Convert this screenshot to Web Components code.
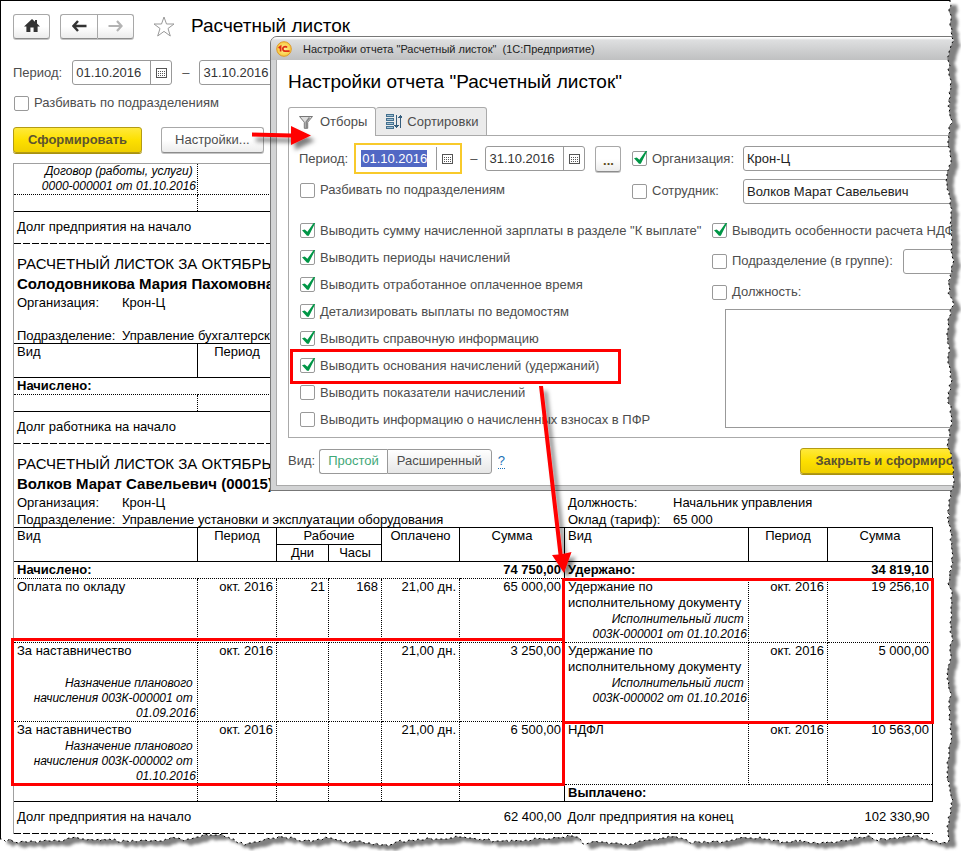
<!DOCTYPE html>
<html lang="ru">
<head>
<meta charset="utf-8">
<title>Расчетный листок</title>
<style>
  body { margin: 0; font: 13px/16px "Liberation Sans", Arial, sans-serif; color: #000; background: #fff; }
</style>
</head>
<body>
<payslip-app></payslip-app>

<script>
function define(name, html, setup) {
  const template = document.createElement('template');
  template.innerHTML = html;
  customElements.define(name, class extends HTMLElement {
    constructor() {
      super();
      this.attachShadow({ mode: 'open' }).append(template.content.cloneNode(true));
    }
    connectedCallback() { if (setup) setup.call(this, this.shadowRoot); }
  });
}

/* ---------- small controls ---------- */

define('ui-button', `
  <style>
    :host { display: inline-flex; }
    button { display: flex; align-items: center; justify-content: center; height: 26px; padding: 0 13px; box-sizing: border-box;
      font: inherit; color: #4d4d4d; white-space: nowrap;
      border: 1px solid #a8a8a8; border-bottom-color: #8c8c8c; border-radius: 3px;
      background: linear-gradient(#fff, #fff 50%, #ececec); box-shadow: 0 1px 0 #c4c4c4; }
    :host([accent]) button { padding: 0 14px; font-weight: bold; border-color: #b39b14; color: #5c5330;
      background: linear-gradient(#ffe93b, #fde000 50%, #efcf00); box-shadow: 0 1px 0 #a89110; }
    :host([square]) button { width: 26px; padding: 4px 0 0; color: #5c4a1a; font-weight: bold; }
    :host([icon]) button { width: 37px; height: 25px; padding: 0; }
    :host([first]) button { border-radius: 3px 0 0 3px; border-right: 0; }
    :host([last]) button { border-radius: 0 3px 3px 0; }
  </style>
  <button type="button"><slot></slot></button>`,
  function (root) {
    if (this.title) root.querySelector('button').setAttribute('aria-label', this.title);
  });

define('ui-check', `
  <style>
    :host { display: inline-flex; }
    label { display: inline-flex; align-items: center; gap: 5px; color: #4d4d4d; white-space: nowrap; }
    .box { position: relative; width: 15px; height: 15px; flex: none; }
    input { appearance: none; display: block; width: 15px; height: 15px; margin: 0; box-sizing: border-box;
      border: 1px solid #999; border-radius: 2px; background: #fff; }
    svg { position: absolute; inset: 0; overflow: visible; display: none; pointer-events: none; }
    input:checked + svg { display: block; }
  </style>
  <label>
    <span class="box"><input type="checkbox"><svg width="15" height="15" viewBox="0 0 15 15"><path d="M2 7.2 L4.8 6.4 L7.4 8.8 L13.6 0 L15.2 0 L8.8 12.8 L7 12.8 Z" fill="#009646"/></svg></span>
    <span><slot></slot></span>
  </label>`,
  function (root) { root.querySelector('input').checked = this.hasAttribute('checked'); });

define('date-field', `
  <style>
    :host { display: inline-flex; }
    .field { display: flex; align-items: center; width: 100px; height: 25px; box-sizing: border-box;
      border: 1px solid #999; border-radius: 3px; background: #fff; }
    input { flex: 1; min-width: 0; box-sizing: border-box; height: 17px; margin: 0; padding: 0 0 0 3px; border: 0; outline: 0;
      font: inherit; color: #333; background: none; }
    button { display: flex; align-items: center; justify-content: center; width: 21px; height: 23px; padding: 0; border: 0;
      border-left: 1px solid #999; background: none; }
    :host([active]) { border: 2px solid #f8ca2b; padding: 1px 2px; }
    :host([active]) .field { border-color: transparent; }
    :host([active]) input { margin: 0 9px 0 2px; padding: 0 0 0 1px; background: #5168c4; color: #fff; }
  </style>
  <div class="field"><input type="text"><button type="button" aria-label="Выбрать дату">
    <svg width="11" height="10" viewBox="0 0 11 10" shape-rendering="crispEdges"><path d="M.5 .5H10.5V9.5H.5Z" fill="#fff" stroke="#555"/><path d="M2 3.5H9M2 5.5H9M2 7.5H9" stroke="#555" stroke-dasharray="1 1"/></svg>
  </button></div>`,
  function (root) {
    const input = root.querySelector('input');
    input.value = this.getAttribute('value');
    input.setAttribute('aria-label', this.getAttribute('label'));
  });

define('text-field', `
  <style>
    :host { display: block; }
    input { display: block; width: 100%; height: 25px; box-sizing: border-box; padding: 0 3px; border: 1px solid #999; border-radius: 3px;
      font: inherit; color: #222; background: #fff; }
  </style>
  <input type="text">`,
  function (root) {
    const input = root.querySelector('input');
    input.value = this.getAttribute('value') || '';
    input.setAttribute('aria-label', this.getAttribute('label'));
  });

/* ---------- toolbar above the report ---------- */

define('report-toolbar', `
  <style>
    :host { display: flex; flex-direction: column; padding: 13px 0 0 13px; height: 150px; box-sizing: content-box; }
    .row { display: flex; align-items: center; }
    .nav { height: 26px; margin-bottom: 21px; }
    .pair { display: flex; margin: 0 19px 0 10px; }
    h1 { font-size: 19px; line-height: 22px; font-weight: normal; margin: 0 0 0 16px; }
    .period { color: #4d4d4d; margin-bottom: 10px; gap: 10px; }
    .split { margin: 0 0 16px 1px; }
    .actions { gap: 19px; }
    svg { display: block; }
  </style>
  <div class="row nav">
    <ui-button icon title="Начальная страница"><svg width="16" height="14" viewBox="0 0 16 14"><path d="M8 0 L11 2.7 V1 H13 V4.5 L16 7.5 H13.6 V13 H9.6 V8.5 H6.4 V13 H2.4 V7.5 H0 Z" fill="#333"/></svg></ui-button>
    <div class="pair">
      <ui-button icon first title="Назад"><svg width="15" height="12" viewBox="0 0 15 12"><path d="M6 1 L1.500 6 L6 11 M1.5 6 H14.5" fill="none" stroke="#333" stroke-width="2.4"/></svg></ui-button>
      <ui-button icon last title="Вперед"><svg width="15" height="12" viewBox="0 0 15 12"><path d="M9 1 L13.500 6 L9 11 M13.5 6 H.5" fill="none" stroke="#b3b3b3" stroke-width="2.2"/></svg></ui-button>
    </div>
    <svg width="22" height="21" viewBox="0 0 22 21"><path d="M11 1 L13.500 8 L21 8 L15 12.500 L17.300 20 L11 15.400 L4.700 20 L7 12.500 L1 8 L8.500 8 Z" fill="#fff" stroke="#999"/></svg>
    <h1>Расчетный листок</h1>
  </div>
  <div class="row period">
    <span>Период:</span>
    <date-field value="01.10.2016" label="Начало периода"></date-field>
    <span>–</span>
    <date-field value="31.10.2016" label="Конец периода"></date-field>
  </div>
  <div class="row split"><ui-check>Разбивать по подразделениям</ui-check></div>
  <div class="row actions">
    <ui-button accent>Сформировать</ui-button>
    <ui-button>Настройки...</ui-button>
  </div>`);

/* ---------- one employee's payslip ---------- */

define('pay-slip', `
  <style>
    :host { display: block; }
    h2, h3 { margin: 0 0 0 3px; font-size: 15px; line-height: 20px; font-weight: normal; white-space: nowrap; }
    h2 { padding-top: 10px; }
    h3 { font-weight: bold; }
    .info { display: grid; grid-template-columns: 105px 1fr 105px 260px; padding-left: 3px; line-height: 17px; white-space: nowrap; }
    .info span { min-width: 0; min-height: 16px; }
    .info span:nth-last-child(-n+4) { height: 16px; }
    table { width: 100%; table-layout: fixed; border-collapse: collapse; }
    th, td { padding: 0 3px; text-align: left; vertical-align: top; font-weight: normal; height: 16px; line-height: 16px; }
    thead th { border: 1px solid #000; text-align: center; }
    thead th.name { text-align: left; }
    thead th:first-child { border-left: 0; }
    thead tr + tr th:first-child { border-left: 1px solid #000; }
    tbody td { border: 1px dotted #000; }
    tbody td:first-child { border-left: 0; }
    tbody:first-of-type tr.continued td { border-top: 0; }
    tbody tr:last-child td { border-bottom: 1px solid #000; }
    tbody td.side { border-left: 1px solid #000; }
    tbody td.end { border-right: 1px solid #000; }
    .total td { font-weight: bold; border-left: 0; border-right: 0; }
    .num { text-align: right; }
    i { display: block; font-size: 12px; text-align: right; line-height: 15px; white-space: pre-line; padding-top: 1px; margin-right: -2px; }
    i.gap { padding-top: 17px; }
    .continued i { padding: 0; }
    tfoot td { height: 30px; padding-bottom: 2px; vertical-align: middle; border: 0; }
    tfoot tr { background: repeating-linear-gradient(90deg, #000 0 7px, transparent 7px 9px) 0 100% / 100% 1px no-repeat; }
  </style>
  <div class="head"></div>
  <table></table>`,
  function (root) {
    const d = SLIPS[this.getAttribute('data-slip')];
    const head = root.querySelector('.head');
    if (d.name) {
      head.innerHTML = `<h2>РАСЧЕТНЫЙ ЛИСТОК ЗА ОКТЯБРЬ</h2><h3>${d.name}</h3><div class="info">${d.info.map(t => `<span>${t}</span>`).join('')}</div>`;
    } else head.remove();
    const cols = '<colgroup><col>' + [79, 52, 53, 78, 105, 184, 79, 105].map(w => `<col style="width:${w}px">`).join('') + '</colgroup>';
    root.querySelector('table').innerHTML = cols + d.table;
  });

const blankRow = '<tr><td></td><td></td><td></td><td></td><td></td><td></td><td class="side"></td><td></td><td class="end"></td></tr>';
const SLIPS = {
  previous: { table: `
    <tbody><tr class="continued"><td><i>Договор (работы, услуги)&nbsp;
0000-000001 от 01.10.2016</i></td><td></td><td></td><td></td><td></td><td></td><td class="side"></td><td></td><td class="end"></td></tr>${blankRow}</tbody>
    <tfoot><tr><td colspan="9">Долг предприятия на начало</td></tr></tfoot>` },
  solodovnikova: {
    name: 'Солодовникова Мария Пахомовна',
    info: ['Организация:', 'Крон-Ц', '', '', '', '', '', '', 'Подразделение:', 'Управление бухгалтерского', '', ''],
    table: `<thead><tr><th class="name" rowspan="2">Вид</th><th rowspan="2">Период</th><th colspan="7"></th></tr><tr><th colspan="7"></th></tr></thead>
    <tbody><tr class="total"><td colspan="9">Начислено:</td></tr>${blankRow}</tbody>
    <tfoot><tr><td colspan="9">Долг работника на начало</td></tr></tfoot>` },
  volkov: {
    name: 'Волков Марат Савельевич (00015)',
    info: ['Организация:', 'Крон-Ц', 'Должность:', 'Начальник управления', 'Подразделение:', 'Управление установки и эксплуатации оборудования', 'Оклад (тариф):', '65 000'],
    table: `
    <thead>
      <tr><th class="name" rowspan="2">Вид</th><th rowspan="2">Период</th><th colspan="2">Рабочие</th><th rowspan="2">Оплачено</th><th rowspan="2">Сумма</th><th class="name" rowspan="2">Вид</th><th rowspan="2">Период</th><th rowspan="2">Сумма</th></tr>
      <tr><th>Дни</th><th>Часы</th></tr>
    </thead>
    <tbody>
      <tr class="total"><td colspan="5">Начислено:</td><td class="num">74&nbsp;750,00</td><td class="side" colspan="2">Удержано:</td><td class="num end">34&nbsp;819,10</td></tr>
      <tr><td>Оплата по окладу</td><td class="num">окт. 2016</td><td class="num">21</td><td class="num">168</td><td class="num">21,00 дн.</td><td class="num">65&nbsp;000,00</td>
        <td class="side">Удержание по исполнительному документу<i>Исполнительный лист&nbsp;
003К-000001 от 01.10.2016</i></td><td class="num">окт. 2016</td><td class="num end">19&nbsp;256,10</td></tr>
      <tr><td>За наставничество<i class="gap">Назначение планового&nbsp;
начисления 003К-000001 от&nbsp;
01.09.2016</i></td><td class="num">окт. 2016</td><td></td><td></td><td class="num">21,00 дн.</td><td class="num">3&nbsp;250,00</td>
        <td class="side">Удержание по исполнительному документу<i>Исполнительный лист&nbsp;
003К-000002 от 01.10.2016</i></td><td class="num">окт. 2016</td><td class="num end">5&nbsp;000,00</td></tr>
      <tr><td>За наставничество<i>Назначение планового&nbsp;
начисления 003К-000002 от&nbsp;
01.10.2016</i></td><td class="num">окт. 2016</td><td></td><td></td><td class="num">21,00 дн.</td><td class="num">6&nbsp;500,00</td>
        <td class="side">НДФЛ</td><td class="num">окт. 2016</td><td class="num end">10&nbsp;563,00</td></tr>
      <tr><td></td><td></td><td></td><td></td><td></td><td></td><td class="side end" colspan="3"><b>Выплачено:</b></td></tr>
    </tbody>
    <tfoot><tr><td colspan="5">Долг предприятия на начало</td><td class="num">62&nbsp;400,00</td><td colspan="2">Долг предприятия на конец</td><td class="num">102&nbsp;330,90</td></tr></tfoot>` }
};

/* ---------- report settings window ---------- */

define('settings-dialog', `
  <style>
    :host { display: block; box-sizing: border-box; border: 1px solid #777; border-radius: 7px 0 0 0;
      background: #d2d3d4; padding: 0 5px 4px; color: #4d4d4d; }
    header { display: flex; align-items: center; gap: 11px; height: 23px; margin: 0 -5px; padding-left: 5px; border-radius: 6px 0 0 0;
      background: linear-gradient(#fff 0 1px, #dedfe0 3px, #bfc0c1); color: #222; font-size: 11px; }
    .body { background: #fff; border-left: 1px solid #aaa; border-bottom: 1px solid #aaa; padding: 11px 37px 11px 11px; }
    h1 { margin: 0 0 14px; font-size: 19px; line-height: 22px; font-weight: normal; color: #000; }
    .tabs { display: flex; height: 29px; }
    .tabs button { display: flex; align-items: center; gap: 7px; height: 29px; margin: 0; padding: 0 8px 0 10px; font: inherit; color: #4d4d4d;
      border: 1px solid #aaa; border-bottom: 0; border-radius: 3px 3px 0 0; background: #fff; box-sizing: border-box; }
    .tabs button + button { border-left: 0; border-bottom: 1px solid #aaa; background: #ebebeb; gap: 5px; }
    .tabs .rule { flex: 1; border-bottom: 1px solid #aaa; }
    .panel { border: 1px solid #aaa; border-top: 0; padding: 7px 0 4px 10px; }
    .top { display: grid; grid-template-columns: 333px 1fr; }
    .period { display: flex; align-items: center; height: 31px; gap: 6px; }
    .period .dash { margin: 0 2px; }
    .period ui-button { margin-left: 4px; }
    .pick { display: grid; grid-template-columns: 111px 1fr; align-items: center; height: 31px; }
    .second { height: 32px; display: flex; align-items: center; padding-left: 1px; box-sizing: border-box; }
    .second.pick { display: grid; padding: 2px 0 0; }
    .options { display: grid; grid-template-columns: 413px 1fr; margin-top: 8px; }
    .list { display: grid; grid-auto-rows: 27px; align-items: center; margin: 3px 0 0 1px; }
    .side { display: flex; flex-direction: column; padding-top: 3px; }
    .side > ui-check { height: 27px; align-items: center; }
    .group { display: flex; align-items: center; gap: 10px; height: 34px; }
    .group text-field { flex: 1; }
    .side .post { height: 28px; }
    textarea { display: block; flex: 1; box-sizing: border-box; min-height: 100px; margin: 3px 0 5px 13px; border: 1px solid #999; resize: none; }
    footer { display: flex; align-items: center; margin-top: 10px; }
    .switch { display: flex; height: 25px; margin: 0 6px 0 4px; }
    .switch button { margin: 0; padding: 0 9px; font: inherit; color: #4d4d4d; border: 1px solid #999; background: linear-gradient(#fff, #e6e6e6); border-radius: 0 3px 3px 0; }
    .switch button:first-child { padding: 0 8px; color: #3fa878; border-right: 0; border-radius: 3px 0 0 3px; background: #fff; }
    a { color: #1a6fb5; text-decoration: none; border-bottom: 1px dotted #1a6fb5; line-height: 14px; }
    footer ui-button { margin-left: auto; }
    svg { display: block; flex: none; }
  </style>
  <header>
    <svg width="16" height="16" viewBox="0 0 16 16"><defs><radialGradient id="g"><stop offset="0" stop-color="#fff6a0"/><stop offset="1" stop-color="#f7c93a"/></radialGradient></defs><circle cx="8" cy="8" r="7.3" fill="url(#g)" stroke="#e0982a"/><path d="M2.600 7 L4.600 5.400 V10.600" fill="none" stroke="#dd2c14" stroke-width="1.7"/><path d="M11 6.600 A2.300 2.300 0 1 0 9 10.200 H13.600" fill="none" stroke="#dd2c14" stroke-width="1.7"/></svg>
    <span>Настройки отчета "Расчетный листок"&nbsp; (1С:Предприятие)</span>
  </header>
  <div class="body">
    <h1>Настройки отчета "Расчетный листок"</h1>
    <div class="tabs" role="tablist">
      <button type="button" role="tab" aria-selected="true"><svg width="14" height="13" viewBox="0 0 14 13"><path d="M.5 .5 H13.5 L8.7 6.2 V12.3 H5.3 V6.2 Z" fill="#ddd" stroke="#777"/><path d="M10.5 1.5 L7.2 6 V12" fill="none" stroke="#888" stroke-width="1.6"/></svg>Отборы</button>
      <button type="button" role="tab"><svg width="16" height="15" viewBox="0 0 16 15" shape-rendering="crispEdges"><path d="M0 1.5H8M0 5.5H8M0 9.5H8M0 13.5H8" stroke="#44708f" stroke-width="3"/><path d="M1 1.5H7M1 5.5H7M1 9.5H7M1 13.5H7" stroke="#9fc0d3"/><path d="M10.5 1V14M9 12.5H12M8 11.5H13M14.5 1V14M13 2.5H16M12 3.5H16" stroke="#355d7c"/></svg>Сортировки</button>
      <span class="rule"></span>
    </div>
    <div class="panel">
      <div class="top">
        <div class="period">
          <span>Период:</span>
          <date-field active value="01.10.2016" label="Начало периода отчета"></date-field>
          <span class="dash">–</span>
          <date-field value="31.10.2016" label="Конец периода отчета"></date-field>
          <ui-button square title="Выбрать период">...</ui-button>
        </div>
        <div class="pick"><ui-check checked>Организация:</ui-check><text-field value="Крон-Ц" label="Организация"></text-field></div>
        <div class="second"><ui-check>Разбивать по подразделениям</ui-check></div>
        <div class="pick second"><ui-check>Сотрудник:</ui-check><text-field value="Волков Марат Савельевич" label="Сотрудник"></text-field></div>
      </div>
      <div class="options">
        <div class="list">
          <ui-check checked>Выводить сумму начисленной зарплаты в разделе "К выплате"</ui-check>
          <ui-check checked>Выводить периоды начислений</ui-check>
          <ui-check checked>Выводить отработанное оплаченное время</ui-check>
          <ui-check checked>Детализировать выплаты по ведомостям</ui-check>
          <ui-check checked>Выводить справочную информацию</ui-check>
          <ui-check checked>Выводить основания начислений (удержаний)</ui-check>
          <ui-check>Выводить показатели начислений</ui-check>
          <ui-check>Выводить информацию о начисленных взносах в ПФР</ui-check>
        </div>
        <div class="side">
          <ui-check checked>Выводить особенности расчета НДФЛ</ui-check>
          <div class="group"><ui-check>Подразделение (в группе):</ui-check><text-field label="Подразделение"></text-field></div>
          <ui-check class="post">Должность:</ui-check>
          <textarea aria-label="Должности"></textarea>
        </div>
      </div>
    </div>
    <footer>
      <span>Вид:</span>
      <div class="switch"><button type="button" aria-pressed="true">Простой</button><button type="button" aria-pressed="false">Расширенный</button></div>
      <a href="#help">?</a>
      <ui-button accent>Закрыть и сформировать</ui-button>
    </footer>
  </div>`);

/* ---------- red frames and arrows drawn over the page ---------- */

define('callout-marks', `
  <style>
    :host { display: block; position: absolute; inset: 0; pointer-events: none; }
    svg { display: block; overflow: visible; }
  </style>
  <svg width="961" height="851" viewBox="0 0 961 851" aria-hidden="true">
    <defs><filter id="s" x="-50%" y="-50%" width="200%" height="200%"><feDropShadow dx="4" dy="5" stdDeviation="2" flood-color="#000" flood-opacity=".5"/></filter></defs>
    <g fill="none" stroke="#f00" stroke-width="3">
      <rect x="291.5" y="350.5" width="328" height="32"/>
      <rect x="12.5" y="639.5" width="551" height="145"/>
      <rect x="563.5" y="579.5" width="369" height="143"/>
    </g>
    <g fill="#f00" filter="url(#s)">
      <path d="M252 132.5 L291 133.5 V126 L311 135.5 L291 145 V137.5 L252 136.5 Z"/>
      <path d="M539 386 H543 L562.500 554 L571.500 552 L564 573 L552 555 L558.500 554.500 Z"/>
    </g>
  </svg>`);

/* ---------- ragged paper edge on the right and at the bottom ---------- */

define('torn-edge', `
  <style>
    :host { display: block; position: absolute; inset: 0; pointer-events: none; }
    svg { display: block; width: 100%; height: 100%; }
  </style>
  <svg aria-hidden="true">
    <defs>
      <clipPath id="outside"><path class="outside" clip-rule="evenodd"/></clipPath>
      <filter id="blur" filterUnits="userSpaceOnUse" x="-20" y="-20" width="4000" height="4000"><feGaussianBlur stdDeviation="1.500"/></filter>
    </defs>
    <path class="outside" fill="#fff" fill-rule="evenodd"/>
    <g clip-path="url(#outside)"><path class="paper" fill="#808080" transform="translate(7 5)" filter="url(#blur)"/></g>
    <path class="line" fill="none" stroke="#000" stroke-dasharray="2 3"/>
  </svg>`,
  function (root) {
    const right = [0,950,20,950,40,953,60,948,80,951,100,949,120,951,140,948,160,950,183,946,200,951,225,951,250,951,260,953,275,950,290,949,305,953,320,949,330,948,365,949,380,951,400,949,420,952,440,948,446,946,455,952,470,953,485,954,500,949,520,948,540,951,560,952,580,949,600,952,620,951,640,952,660,950,670,947,690,950,710,949,740,951,760,948,780,948,800,952,820,948,842,948];
    const bottom = [0,839,8,841,12,840,20,843,28,842,60,841,75,838,100,840,130,841,160,840,175,838,185,840,210,835,222,835,235,840,245,844,255,842,270,838,285,837,310,842,325,838,340,841,370,843,390,846,400,841,430,839,450,838,464,837,480,840,500,841,520,840,550,838,575,836,583,843,600,842,625,845,640,842,660,838,672,836,690,842,720,842,740,838,760,838,780,842,800,841,825,843,840,841,855,838,870,837,880,840,900,838,918,836,930,841,940,843,948,842];
    const trace = list => {
      const out = [];
      let seed = 7;
      for (let i = 0; i + 3 < list.length; i += 2) {
        const [a, b, c, d] = list.slice(i, i + 4);
        for (let p = a; p < c; p += 3) {
          seed = (seed * 73 + 41) % 101;
          out.push([p, Math.round(b + (d - b) * (p - a) / (c - a) + (seed / 50 - 1) * 1.4)]);
        }
      }
      out.push(list.slice(-2));
      return out;
    };
    const draw = () => {
      const w = this.clientWidth, h = this.clientHeight;
      const r = trace(right).map(([y, x]) => [x + w - 961, Math.round(y * h / 851)]);
      const b = trace(bottom).map(([x, y]) => [Math.round(x * w / 961), y + h - 851]);
      const line = 'M' + [...r, ...b.reverse()].map(p => p.join(' ')).join('L');
      const paper = line + 'L0 0Z';
      root.querySelector('.line').setAttribute('d', line);
      root.querySelector('.paper').setAttribute('d', paper);
      root.querySelectorAll('.outside').forEach(e => e.setAttribute('d', `M0 0H${w}V${h}H0Z${paper}`));
    };
    draw();
    new ResizeObserver(draw).observe(this);
  });

/* ---------- whole page ---------- */

define('payslip-app', `
  <style>
    :host { display: block; position: relative; overflow: hidden; min-height: 100vh; box-sizing: border-box; padding-bottom: 16px;
      background: linear-gradient(#000, #000) 0 0 / 100% 1px no-repeat, linear-gradient(#000, #000) 0 0 / 1px 100% no-repeat, #fff; }
    .sheet { margin-left: 13px; padding-right: 28px; border-left: 1px solid #a0a0a0; border-top: 1px solid #a0a0a0; }
    settings-dialog { position: absolute; left: 270px; top: 36px; right: -80px; }
  </style>
  <report-toolbar></report-toolbar>
  <main class="sheet">
    <pay-slip data-slip="previous"></pay-slip>
    <pay-slip data-slip="solodovnikova"></pay-slip>
    <pay-slip data-slip="volkov"></pay-slip>
  </main>
  <settings-dialog role="dialog"></settings-dialog>
  <callout-marks></callout-marks>
  <torn-edge></torn-edge>`);
</script>
</body>
</html>
